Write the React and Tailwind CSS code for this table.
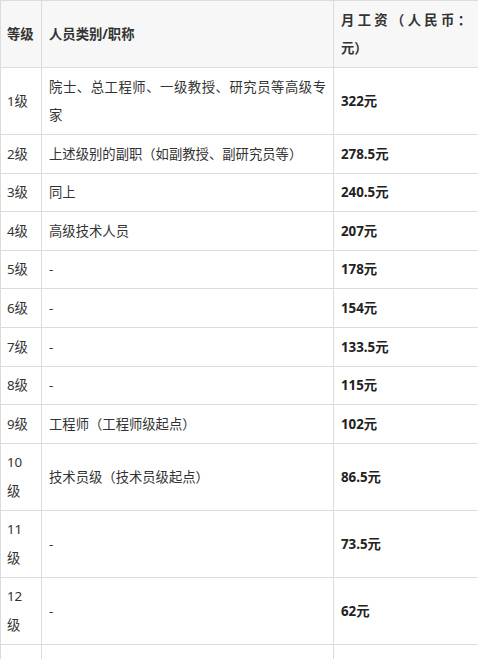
const rows = [
  { level: "1", title: "院士、总工程师、一级教授、研究员等高级专家", pay: "322元" },
  { level: "2", title: "上述级别的副职（如副教授、副研究员等）", pay: "278.5元" },
  { level: "3", title: "同上", pay: "240.5元" },
  { level: "4", title: "高级技术人员", pay: "207元" },
  { level: "5", title: "-", pay: "178元" },
  { level: "6", title: "-", pay: "154元" },
  { level: "7", title: "-", pay: "133.5元" },
  { level: "8", title: "-", pay: "115元" },
  { level: "9", title: "工程师（工程师级起点）", pay: "102元" },
  { level: "10", title: "技术员级（技术员级起点）", pay: "86.5元" },
  { level: "11", title: "-", pay: "73.5元" },
  { level: "12", title: "-", pay: "62元" },
  { level: "13", title: "-", pay: "55.5元" },
  { level: "14", title: "-", pay: "49.5元" },
];

const cell =
  "border border-[#dcdcdc] px-[6px] py-[4.6px] align-middle text-justify";

export default function App() {
  return (
    <div
      className="w-[478px] bg-white text-[13.33px] leading-[28.4px] text-[#333] [text-spacing-trim:space-all]"
      style={{ fontFamily: '"Noto Sans", "Noto Sans CJK SC", sans-serif' }}
    >
      <table className="w-[478px] table-fixed border-collapse">
        <colgroup>
          <col className="w-[41px]" />
          <col className="w-[292px]" />
          <col className="w-[145px]" />
        </colgroup>
        <thead>
          <tr className="bg-[#f7f7f7]">
            <th className={`${cell} text-left font-bold`}>等级</th>
            <th className={`${cell} px-[7px] text-left font-bold`}>人员类别/职称</th>
            <th className={`${cell} px-[7px] font-bold`}>月工资（人民币：元）</th>
          </tr>
        </thead>
        <tbody>
          {rows.map((r) => (
            <tr key={r.level}>
              <td className={cell}>
                {r.level.length > 1 ? (
                  <>
                    {r.level}
                    <br />级
                  </>
                ) : (
                  `${r.level}级`
                )}
              </td>
              <td className={`${cell} px-[7px]`}>{r.title}</td>
              <td className={`${cell} px-[7px] font-bold text-[#222]`}>{r.pay}</td>
            </tr>
          ))}
        </tbody>
      </table>
    </div>
  );
}
